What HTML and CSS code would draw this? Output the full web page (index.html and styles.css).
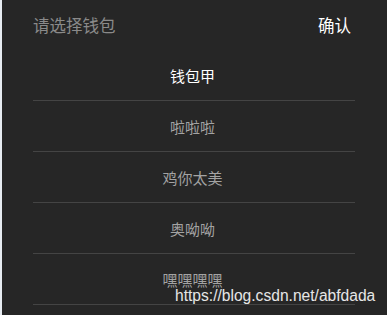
FILE: index.html
```html
<!DOCTYPE html>
<html lang="zh">
<head>
<meta charset="utf-8">
<link rel="stylesheet" href="styles.css">
</head>
<body>
<div class="sheet">
  <div class="header">
    <span class="title">请选择钱包</span>
    <span class="confirm">确认</span>
  </div>
  <ul class="list">
    <li class="item selected">钱包甲</li>
    <li class="item">啦啦啦</li>
    <li class="item">鸡你太美</li>
    <li class="item">奥呦呦</li>
    <li class="item">嘿嘿嘿嘿</li>
  </ul>
  <div class="watermark">https://blog.csdn.net/abfdada</div>
</div>
</body>
</html>
```
FILE: styles.css
```css
html, body {
  margin: 0;
  padding: 0;
  background: #262626;
}
.sheet {
  position: relative;
  width: 385px;
  height: 315px;
  border-left: 2px solid #e6ebf1;
  background: #262626;
  overflow: hidden;
  font-family: "Noto Sans CJK SC", "Noto Sans", sans-serif;
}
.header {
  height: 50px;
  display: flex;
  align-items: center;
  justify-content: space-between;
  padding: 0 36px 0 31px;
  font-size: 16.5px;
}
.title {
  color: #8a8a8a;
}
.confirm {
  color: #ffffff;
}
.list {
  list-style: none;
  margin: 0 32px 0 31px;
  padding: 0;
}
.item {
  height: 50px;
  display: flex;
  align-items: center;
  justify-content: center;
  padding-right: 3px;
  border-bottom: 1px solid #444444;
  font-size: 15px;
  color: #a3a3a3;
}
.item.selected {
  color: #ffffff;
}
.watermark {
  position: absolute;
  left: 173px;
  top: 287px;
  font-family: "Liberation Sans", Arial, sans-serif;
  font-size: 15.6px;
  color: #e6e6e6;
  line-height: 18px;
}
```
